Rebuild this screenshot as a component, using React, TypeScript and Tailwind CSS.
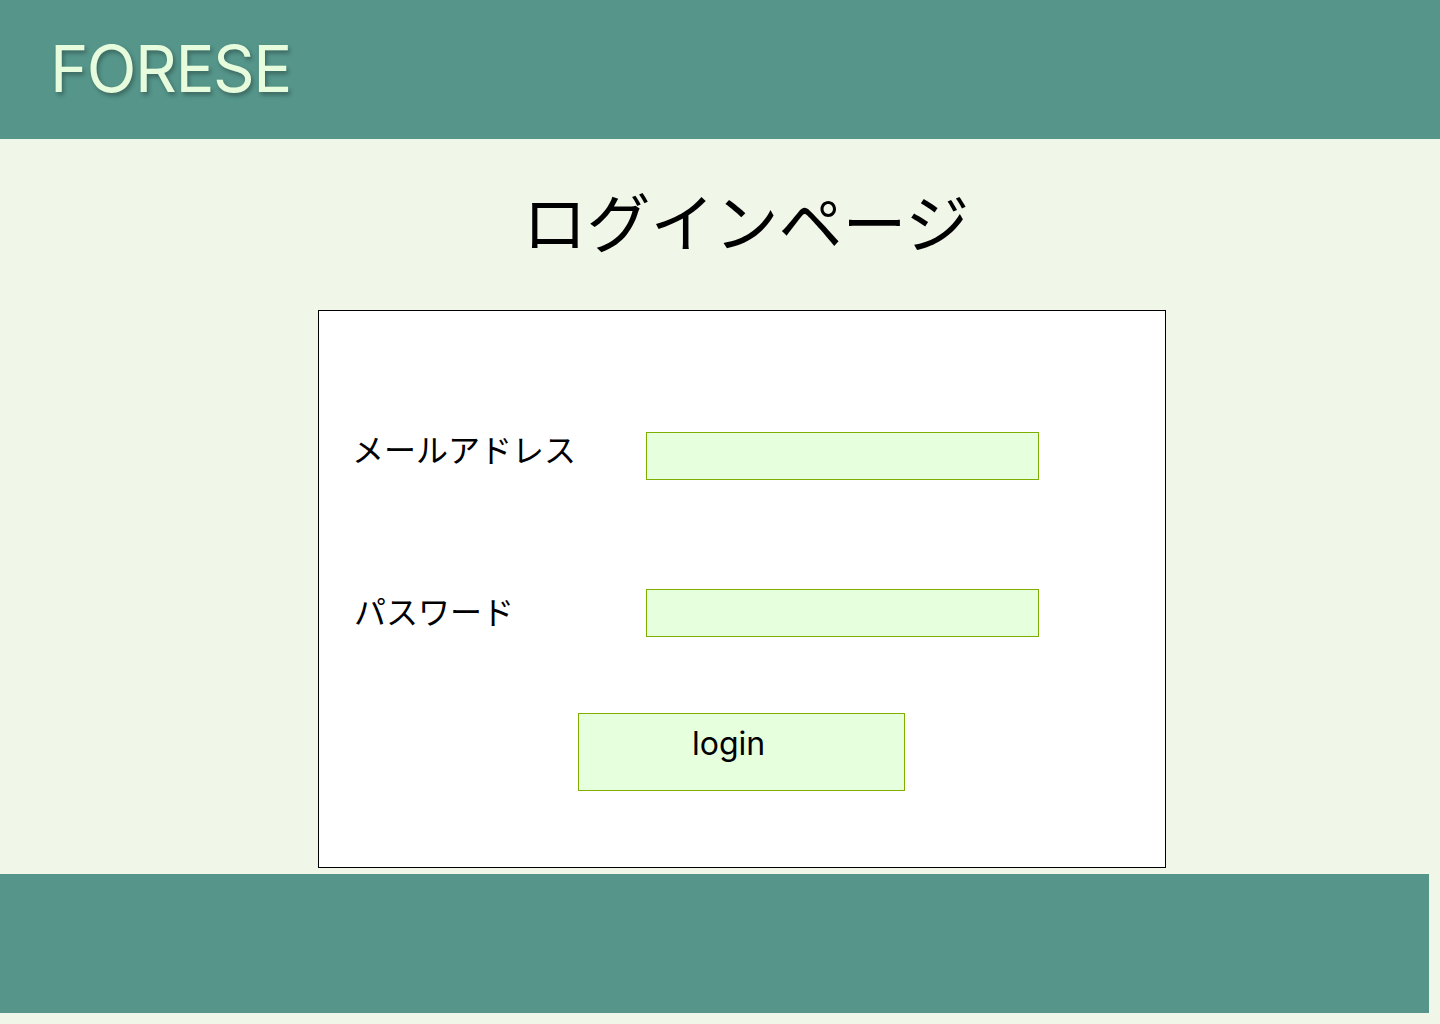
import React from 'react';

const jp = "font-['Noto_Sans_CJK_JP','Noto_Sans',sans-serif]";

export default function App() {
  return (
    <div className="min-h-screen w-[1440px] bg-[#f0f7e8] pb-[11px]">
      {/* ヘッダー */}
      <header className="h-[139px] bg-[#55958a] flex items-center pl-[50px]">
        <h1 className="font-['Inter',sans-serif] text-[65px] leading-none text-[#e6fcdc] tracking-[-1.5px] -mt-[2px] [text-shadow:2px_3px_4px_rgba(0,0,0,0.3)]">
          FORESE
        </h1>
      </header>

      <main className="pl-[318px]">
        <div className="w-[848px] h-[171px] flex items-center justify-center">
          <h2 className={`${jp} text-[64px] leading-none text-black -mt-[12px] pl-[8px]`}>ログインページ</h2>
        </div>

        {/* ログインフォーム */}
        <div className="w-[848px] h-[558px] border border-black bg-white pt-[121px]">
          <div className="flex items-center">
            <label className={`${jp} w-[327px] pl-[33px] text-[32px] leading-none text-black -mt-[16px]`}>
              メールアドレス
            </label>
            <input
              type="email"
              className="w-[393px] h-[48px] bg-[#e6ffdd] border border-[#7fae00] outline-none px-2"
            />
          </div>

          <div className="flex items-center mt-[109px]">
            <label className={`${jp} w-[327px] pl-[35px] text-[32px] leading-none text-black -mt-[6px]`}>
              パスワード
            </label>
            <input
              type="password"
              className="w-[393px] h-[48px] bg-[#e6ffdd] border border-[#7fae00] outline-none px-2"
            />
          </div>

          <div className="mt-[76px] pl-[259px]">
            <button className="w-[327px] h-[78px] bg-[#e6ffdd] border border-[#7fae00] text-left pl-[113px] pt-[11px] flex items-start font-['Inter',sans-serif] text-[32px] leading-[38px] text-black">
              login
            </button>
          </div>
        </div>
      </main>

      <footer className="mt-[6px] w-[1429px] h-[139px] bg-[#55958a]" />
    </div>
  );
}
